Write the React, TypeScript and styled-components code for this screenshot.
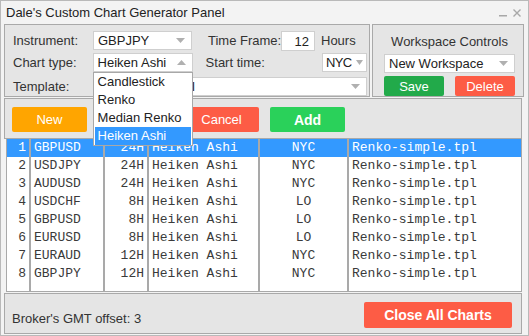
import React from "react";
import styled, { createGlobalStyle } from "styled-components";

const Global = createGlobalStyle`
  html, body { margin: 0; padding: 0; background: #f0f0f0; }
  * { box-sizing: border-box; }
`;

const UI = `"Liberation Sans", Arial, sans-serif`;
const MONO = `"Liberation Mono", "Courier New", monospace`;

const Window = styled.div`
  width: 529px;
  height: 336px;
  border: 1px solid #b9b9b9;
  background: #f3f3f3;
  display: flex;
  flex-direction: column;
  font-family: ${UI};
  font-size: 13px;
  color: #333;
  overflow: hidden;
`;

const TitleBar = styled.div`
  height: 23px;
  display: flex;
  align-items: center;
  justify-content: space-between;
  padding: 0 7px 0 5px;
  color: #222;
  font-size: 13px;
`;

const TitleIcons = styled.div`
  display: flex;
  gap: 6px;
  align-items: center;
`;

const TopRow = styled.div`
  display: flex;
  gap: 2px;
  padding: 0 4px 0 3px;
  height: 73px;
`;

const Panel = styled.div<{ $w?: number }>`
  border: 1px solid #a9a9a9;
  background: #e5e5e5;
  ${(p) => (p.$w ? `width: ${p.$w}px;` : "flex: 1;")}
`;

const FormPanel = styled(Panel)`
  padding: 6px 2px 0 8px;
  display: flex;
  flex-direction: column;
  gap: 3px;
`;

const FormRow = styled.div<{ $mt?: number }>`
  display: flex;
  align-items: center;
  height: 19px;
  margin-top: ${(p) => p.$mt ?? 0}px;
`;

const Label = styled.span<{ $w?: number; $ml?: number }>`
  display: inline-block;
  ${(p) => (p.$w ? `width: ${p.$w}px;` : "")}
  margin-left: ${(p) => p.$ml ?? 0}px;
  color: #333;
  white-space: nowrap;
`;

const SelectBox = styled.div<{ $w?: number; $ml?: number; $tight?: boolean }>`
  position: relative;
  height: 19px;
  background: #fff;
  border: 1px solid #cfcfcf;
  display: flex;
  align-items: center;
  justify-content: space-between;
  padding: ${(p) => (p.$tight ? "0 3px 0 3px" : "0 6px 0 4px")};
  letter-spacing: ${(p) => (p.$tight ? "-0.6px" : "0")};
  color: #222;
  ${(p) => (p.$w ? `width: ${p.$w}px; flex: none;` : "flex: 1;")}
  margin-left: ${(p) => p.$ml ?? 0}px;
  white-space: nowrap;
`;

const NumInput = styled.div`
  width: 34px;
  height: 20px;
  background: #fff;
  border: 1px solid #cfcfcf;
  text-align: right;
  padding: 2px 5px 0 0;
  color: #222;
`;

const Dropdown = styled.div`
  position: absolute;
  left: -1px;
  top: 18px;
  width: 100px;
  background: #fff;
  border: 1px solid #a8a8a8;
  z-index: 10;
  padding: 0 1px;
`;

const DropItem = styled.div<{ $active?: boolean }>`
  height: 18px;
  line-height: 18px;
  padding-left: 3px;
  color: ${(p) => (p.$active ? "#fff" : "#222")};
  background: ${(p) => (p.$active ? "#3399ff" : "transparent")};
`;

const WsPanel = styled(Panel)`
  display: flex;
  flex-direction: column;
  align-items: center;
  padding: 7px 8px 0 11px;
`;

const WsTitle = styled.div`
  height: 19px;
  line-height: 19px;
  color: #333;
  margin-bottom: 3px;
`;

const WsButtons = styled.div`
  display: flex;
  justify-content: space-between;
  width: 131px;
  margin-top: 3px;
`;

const Btn = styled.button<{ $bg: string; $w: number; $h?: number; $bold?: boolean }>`
  width: ${(p) => p.$w}px;
  height: ${(p) => p.$h ?? 20}px;
  background: ${(p) => p.$bg};
  border: none;
  border-radius: 2px;
  color: #fff;
  font-family: ${UI};
  font-size: ${(p) => (p.$bold ? 14 : 13)}px;
  font-weight: ${(p) => (p.$bold ? 700 : 400)};
  padding: 0;
  cursor: pointer;
`;

const Toolbar = styled(Panel)`
  flex: none;
  height: 41px;
  margin: 1px 6px 0 3px;
  padding: 8px 0 0 7px;
  display: flex;
  gap: 11px;
`;

const TableWrap = styled.div`
  margin: 0 6px 0 5px;
  height: 153px;
  border: 1px solid #a9a9a9;
  border-top: none;
  background: #fff;
  display: grid;
  grid-template-columns: 24px 74px 44px 111px 89px 1fr;
  grid-template-rows: repeat(8, 18px) 1fr;
  font-family: ${MONO};
  font-size: 13px;
  color: #3a3a3a;
`;

const Cell = styled.div<{ $sel?: boolean; $align?: string; $last?: boolean }>`
  border-right: ${(p) => (p.$last ? "none" : "2px solid #a9a9a9")};
  background: ${(p) => (p.$sel ? "#3399ff" : "#fff")};
  color: ${(p) => (p.$sel ? "#fff" : "#3a3a3a")};
  text-align: ${(p) => p.$align ?? "left"};
  line-height: 18px;
  padding: 0 3px 0 3px;
  white-space: nowrap;
  overflow: hidden;
`;

const BottomPanel = styled(Panel)`
  flex: none;
  height: 41px;
  margin: 1px 6px 0 3px;
  display: flex;
  align-items: center;
  justify-content: space-between;
  padding: 0 9px 0 7px;
`;

const Offset = styled.span`
  margin-top: 10px;
  color: #333;
`;

const Arrow = ({ up, w = 9 }: { up?: boolean; w?: number }) => (
  <svg width={w} height="5" viewBox="0 0 9 5" preserveAspectRatio="none">
    <path d={up ? "M0 5 L4.5 0 L9 5 Z" : "M0 0 L9 0 L4.5 5 Z"} fill="#b0b0b0" />
  </svg>
);

const rows = [
  ["1", "GBPUSD", "24H", "Heiken Ashi", "NYC", "Renko-simple.tpl"],
  ["2", "USDJPY", "24H", "Heiken Ashi", "NYC", "Renko-simple.tpl"],
  ["3", "AUDUSD", "24H", "Heiken Ashi", "NYC", "Renko-simple.tpl"],
  ["4", "USDCHF", "8H", "Heiken Ashi", "LO", "Renko-simple.tpl"],
  ["5", "GBPUSD", "8H", "Heiken Ashi", "LO", "Renko-simple.tpl"],
  ["6", "EURUSD", "8H", "Heiken Ashi", "LO", "Renko-simple.tpl"],
  ["7", "EURAUD", "12H", "Heiken Ashi", "NYC", "Renko-simple.tpl"],
  ["8", "GBPJPY", "12H", "Heiken Ashi", "NYC", "Renko-simple.tpl"],
];
const aligns = ["right", "left", "right", "left", "center", "left"];

export default function App() {
  return (
    <>
      <Global />
      <Window>
        <TitleBar>
          <span>Dale's Custom Chart Generator Panel</span>
          <TitleIcons>
            <svg width="8" height="8" viewBox="0 0 8 8">
              <rect x="0" y="6" width="8" height="1.5" fill="#a8a8a8" />
            </svg>
            <svg width="8" height="8" viewBox="0 0 8 8">
              <path d="M0.5 0.5 L7.5 7.5 M7.5 0.5 L0.5 7.5" stroke="#a8a8a8" strokeWidth="1.4" />
            </svg>
          </TitleIcons>
        </TitleBar>
        <TopRow>
          <FormPanel $w={366}>
            <FormRow>
              <Label $w={80}>Instrument:</Label>
              <SelectBox $w={99}>
                GBPJPY <Arrow />
              </SelectBox>
              <Label $ml={16} $w={73}>Time Frame:</Label>
              <NumInput>12</NumInput>
              <Label $ml={6}>Hours</Label>
            </FormRow>
            <FormRow>
              <Label $w={80}>Chart type:</Label>
              <SelectBox $w={100}>
                Heiken Ashi <Arrow up />
                <Dropdown>
                  <DropItem>Candlestick</DropItem>
                  <DropItem>Renko</DropItem>
                  <DropItem>Median Renko</DropItem>
                  <DropItem $active>Heiken Ashi</DropItem>
                </Dropdown>
              </SelectBox>
              <Label $ml={13} $w={117}>Start time:</Label>
              <SelectBox $w={45} $tight>
                NYC <Arrow w={7} />
              </SelectBox>
            </FormRow>
            <FormRow $mt={2}>
              <Label $w={80}>Template:</Label>
              <SelectBox>
                Renko-simple.tpl <Arrow />
              </SelectBox>
            </FormRow>
          </FormPanel>
          <WsPanel>
            <WsTitle>Workspace Controls</WsTitle>
            <SelectBox $w={131}>
              New Workspace <Arrow />
            </SelectBox>
            <WsButtons>
              <Btn $bg="#22aa4a" $w={60}>Save</Btn>
              <Btn $bg="#fd5c45" $w={60}>Delete</Btn>
            </WsButtons>
          </WsPanel>
        </TopRow>
        <Toolbar>
          <Btn $bg="#ffa500" $w={75} $h={25}>New</Btn>
          <Btn $bg="#1e90ff" $w={75} $h={25}>Edit</Btn>
          <Btn $bg="#fd5c45" $w={75} $h={25}>Cancel</Btn>
          <Btn $bg="#2ad15a" $w={75} $h={25} $bold>Add</Btn>
        </Toolbar>
        <TableWrap>
          {rows.map((r, i) =>
            r.map((c, j) => (
              <Cell key={`${i}-${j}`} $sel={i === 0} $align={aligns[j]} $last={j === 5}>
                {c}
              </Cell>
            ))
          )}
          {aligns.map((_, j) => (
            <Cell key={`f-${j}`} $last={j === 5} />
          ))}
        </TableWrap>
        <BottomPanel>
          <Offset>Broker's GMT offset: 3</Offset>
          <Btn $bg="#fd5c45" $w={148} $h={26} $bold style={{ marginTop: 2 }}>
            Close All Charts
          </Btn>
        </BottomPanel>
      </Window>
    </>
  );
}
